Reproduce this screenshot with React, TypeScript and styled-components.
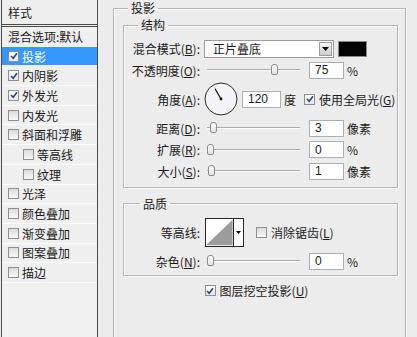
import React from "react";
import styled, { createGlobalStyle } from "styled-components";

const GlobalStyle = createGlobalStyle`
  html, body { margin: 0; padding: 0; background: #ececec; }
`;

const Frame = styled.div`
  width: 417px;
  height: 337px;
  overflow: hidden;
  display: flex;
  background: #ececec;
  font: 12px "Noto Sans CJK SC", "Liberation Sans", sans-serif;
  color: #1a1a1a;
`;

const StylesPanel = styled.div`
  box-sizing: border-box;
  width: 97px;
  margin-left: 1px;
  border-left: 1px solid #4a4a4a;
  border-right: 1px solid #4a4a4a;
  background: #f1f1f1;
  display: flex;
  flex-direction: column;
`;

const PanelHeader = styled.div`
  height: 24px;
  padding-left: 6px;
  display: flex;
  align-items: center;
  border-bottom: 3px double #4a4a4a;
  background: #eeeeee;
`;

const PanelRow = styled.div<{ $selected?: boolean; $indent?: number }>`
  box-sizing: border-box;
  height: 19.7px;
  display: flex;
  align-items: center;
  gap: 3px;
  padding-left: ${(p) => p.$indent ?? 6}px;
  border-bottom: 1px solid #fbfbfb;
  background: ${(p) => (p.$selected ? "#3399ff" : "#efefef")};
  color: ${(p) => (p.$selected ? "#fff" : "#1a1a1a")};
  white-space: nowrap;
`;

const Box = styled.span<{ $checked?: boolean }>`
  box-sizing: border-box;
  width: 11px;
  height: 11px;
  flex: none;
  display: inline-flex;
  align-items: center;
  justify-content: center;
  border: 1px solid #8e8f8f;
  background: ${(p) =>
    p.$checked ? "linear-gradient(#ffffff, #e6e6e6)" : "linear-gradient(#dcdcdc, #f7f7f7)"};
`;

const Content = styled.div`
  flex: 1;
  padding-left: 15px;
`;

const Group = styled.fieldset<{ $width: number; $pad: string; $top: number }>`
  box-sizing: border-box;
  width: ${(p) => p.$width}px;
  margin: ${(p) => p.$top}px 0 0 0;
  padding: ${(p) => p.$pad};
  border: 1px solid #b4b4b4;
  box-shadow: inset 1px 1px 0 #fff, 1px 1px 0 #fff;
  min-inline-size: 0;
`;

const Legend = styled.legend<{ $offset: number }>`
  line-height: 14px;
  padding: 0 3px;
  margin-left: ${(p) => p.$offset}px;
`;

const Rows = styled.div<{ $gap: number }>`
  display: flex;
  flex-direction: column;
  gap: ${(p) => p.$gap}px;
`;

const Row = styled.div<{ $h: number }>`
  height: ${(p) => p.$h}px;
  display: flex;
  align-items: center;
  white-space: nowrap;
`;

const Label = styled.span`
  width: 76px;
  flex: none;
  text-align: right;
  margin-right: 4px;
`;

const Key = styled.span`
  text-decoration: underline;
  text-underline-offset: 1px;
`;

const Select = styled.div`
  box-sizing: border-box;
  width: 130px;
  height: 18px;
  display: flex;
  align-items: center;
  justify-content: space-between;
  padding: 0 1px 0 8px;
  border: 1px solid #9a9a9a;
  background: #fff;
`;

const DropButton = styled.span`
  box-sizing: border-box;
  width: 13px;
  height: 14px;
  display: inline-flex;
  align-items: center;
  justify-content: center;
  border: 1px solid #9c9c9c;
  background: linear-gradient(#f4f4f4, #cfcfcf);
`;

const Swatch = styled.span`
  box-sizing: border-box;
  width: 29px;
  height: 16px;
  margin-left: 4px;
  border: 1px solid #8a8a8a;
  background: #050505;
`;

const Track = styled.div`
  position: relative;
  width: 96px;
  height: 12px;
  flex: none;
  &::before {
    content: "";
    position: absolute;
    left: 3px;
    right: 0;
    top: 5px;
    border-top: 1px solid #a9a9a9;
    border-bottom: 1px solid #fff;
  }
`;

const Thumb = styled.span`
  position: absolute;
  top: 0;
  box-sizing: border-box;
  width: 7px;
  height: 11px;
  border: 1px solid #8d8d8d;
  border-radius: 3px 3px 2px 2px;
  background: linear-gradient(#fdfdfd, #e2e2e2);
`;

const Field = styled.span<{ $w: number; $ml: number }>`
  box-sizing: border-box;
  width: ${(p) => p.$w}px;
  height: 17px;
  margin-left: ${(p) => p.$ml}px;
  display: inline-flex;
  align-items: center;
  padding-left: 5px;
  border: 1px solid #aab0b8;
  background: #fff;
  font-family: "Liberation Sans", sans-serif;
`;

const Unit = styled.span<{ $ml?: number }>`
  margin-left: ${(p) => p.$ml ?? 3}px;
`;

const CheckLine = styled.span<{ $ml?: number }>`
  display: inline-flex;
  align-items: center;
  gap: 4px;
  margin-left: ${(p) => p.$ml ?? 0}px;
`;

const Contour = styled.div`
  box-sizing: border-box;
  width: 39px;
  height: 29px;
  margin-left: 1px;
  display: flex;
  border: 1px solid #262626;
  background: #fff;
`;

const ContourDrop = styled.span`
  width: 10px;
  display: flex;
  align-items: center;
  justify-content: center;
  border-left: 1px solid #262626;
`;

const Footer = styled.div`
  box-sizing: border-box;
  width: 275px;
  height: 18px;
  margin-top: 6px;
  padding-right: 8px;
  display: flex;
  align-items: center;
  justify-content: center;
`;

const Spacer = styled.div`
  height: 60px;
`;

const Check = ({ on }: { on?: boolean }) => (
  <Box $checked={on}>
    {on && (
      <svg width="8" height="8" viewBox="0 0 8 8">
        <path d="M1 4 L3.2 6.2 L7 1.2" fill="none" stroke="#27418c" strokeWidth="1.6" />
      </svg>
    )}
  </Box>
);

const Triangle = () => (
  <svg width="7" height="4" viewBox="0 0 7 4">
    <path d="M0 0 H7 L3.5 4 Z" fill="#000" />
  </svg>
);

const Slider = ({ value }: { value: number }) => (
  <Track>
    <Thumb style={{ left: 3 + value * 0.85 }} />
  </Track>
);

const Dial = ({ angle }: { angle: number }) => {
  const r = (angle * Math.PI) / 180;
  return (
    <svg width="34" height="34" viewBox="0 0 34 34" style={{ flex: "none" }}>
      <circle cx="17" cy="17" r="16" fill="#f4f4f8" stroke="#2b2b2b" strokeWidth="1" />
      <line x1="17" y1="17" x2={17 + 12 * Math.cos(r)} y2={17 - 12 * Math.sin(r)} stroke="#111" strokeWidth="1.2" />
      <circle cx="17" cy="17" r="1.4" fill="#111" />
    </svg>
  );
};

const effects = [
  { name: "投影", on: true, sel: true },
  { name: "内阴影", on: true },
  { name: "外发光", on: true },
  { name: "内发光" },
  { name: "斜面和浮雕" },
  { name: "等高线", sub: true },
  { name: "纹理", sub: true },
  { name: "光泽" },
  { name: "颜色叠加" },
  { name: "渐变叠加" },
  { name: "图案叠加" },
  { name: "描边" },
];

export default function App() {
  return (
    <Frame>
      <GlobalStyle />
      <StylesPanel>
        <PanelHeader>样式</PanelHeader>
        <PanelRow>混合选项:默认</PanelRow>
        {effects.map((e) => (
          <PanelRow key={e.name} $selected={e.sel} $indent={e.sub ? 21 : 6}>
            <Check on={e.on} />
            {e.name}
          </PanelRow>
        ))}
      </StylesPanel>

      <Content>
        <Group $width={293} $pad="0 7px 0 9px" $top={1}>
          <Legend $offset={5}>投影</Legend>
          <Group $width={275} $pad="7px 0 6px 0" $top={3}>
            <Legend $offset={14}>结构</Legend>
            <Rows $gap={2.5}>
              <Row $h={19}>
                <Label>混合模式(<Key>B</Key>):</Label>
                <Select>
                  正片叠底
                  <DropButton><Triangle /></DropButton>
                </Select>
                <Swatch />
              </Row>
              <Row $h={19}>
                <Label>不透明度(<Key>O</Key>):</Label>
                <Slider value={75} />
                <Field $w={35} $ml={9}>75</Field>
                <Unit>%</Unit>
              </Row>
              <Row $h={34}>
                <Label>角度(<Key>A</Key>):</Label>
                <Dial angle={120} />
                <Field $w={39} $ml={4}>120</Field>
                <Unit $ml={3}>度</Unit>
                <CheckLine $ml={8}>
                  <Check on />
                  <span>使用全局光(<Key>G</Key>)</span>
                </CheckLine>
              </Row>
              <Row $h={19}>
                <Label>距离(<Key>D</Key>):</Label>
                <Slider value={3} />
                <Field $w={35} $ml={9}>3</Field>
                <Unit>像素</Unit>
              </Row>
              <Row $h={19}>
                <Label>扩展(<Key>R</Key>):</Label>
                <Slider value={0} />
                <Field $w={35} $ml={9}>0</Field>
                <Unit>%</Unit>
              </Row>
              <Row $h={19}>
                <Label>大小(<Key>S</Key>):</Label>
                <Slider value={1} />
                <Field $w={35} $ml={9}>1</Field>
                <Unit>像素</Unit>
              </Row>
            </Rows>
          </Group>

          <Group $width={275} $pad="7px 0 4px 0" $top={9}>
            <Legend $offset={16}>品质</Legend>
            <Rows $gap={5}>
              <Row $h={29}>
                <Label>等高线:</Label>
                <Contour>
                  <svg width="28" height="27" viewBox="0 0 28 27">
                    <path d="M0 27 L28 0 V27 Z" fill="#9c9c9c" />
                  </svg>
                  <ContourDrop>
                    <svg width="5" height="3" viewBox="0 0 5 3">
                      <path d="M0 0 H5 L2.5 3 Z" fill="#000" />
                    </svg>
                  </ContourDrop>
                </Contour>
                <CheckLine $ml={12}>
                  <Check />
                  <span>消除锯齿(<Key>L</Key>)</span>
                </CheckLine>
              </Row>
              <Row $h={19}>
                <Label>杂色(<Key>N</Key>):</Label>
                <Slider value={0} />
                <Field $w={35} $ml={9}>0</Field>
                <Unit>%</Unit>
              </Row>
            </Rows>
          </Group>

          <Footer>
            <CheckLine>
              <Check on />
              <span>图层挖空投影(<Key>U</Key>)</span>
            </CheckLine>
          </Footer>
          <Spacer />
        </Group>
      </Content>
    </Frame>
  );
}
